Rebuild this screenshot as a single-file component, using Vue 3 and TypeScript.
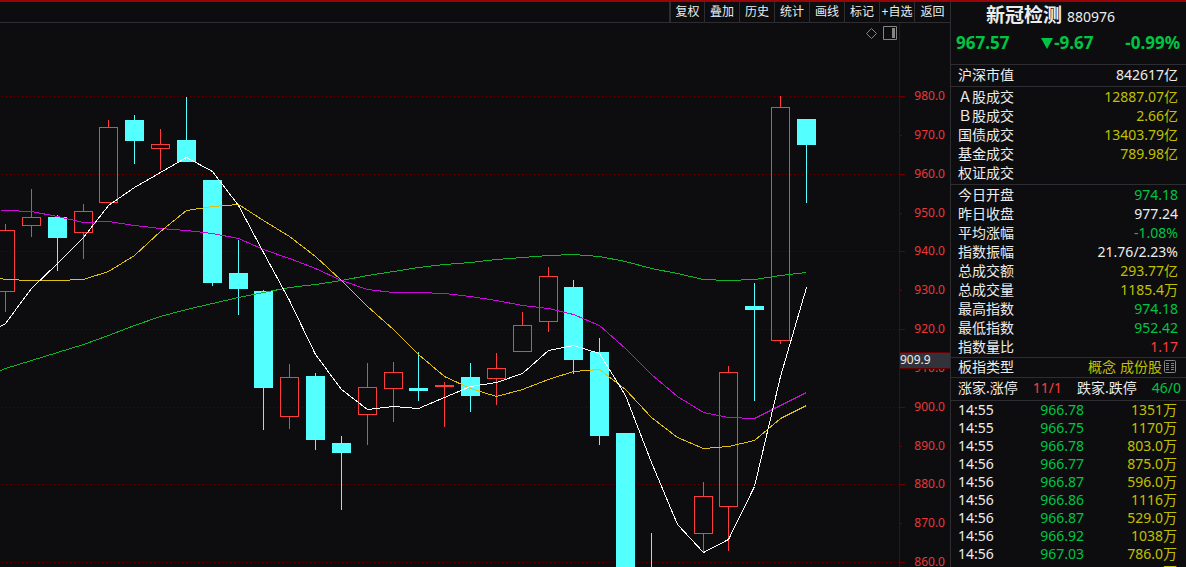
<script setup lang="ts">
type Kind = 'up' | 'down'
type Candle = [kind: Kind, x: number, high: number, top: number, bottom: number, low: number]
type Tone = 'green' | 'red' | 'yellow' | 'white'
type Stat = { label: string; value: string; tone: Tone }

const tools: string[] = ['复权', '叠加', '历史', '统计', '画线', '标记', '+自选', '返回']

const candles: Candle[] = [
  ['up', 5, 224, 230, 292, 312],
  ['up', 31, 189, 217, 226, 237],
  ['down', 57, 215, 217, 238, 271],
  ['up', 83, 204, 211, 233, 259],
  ['up', 108, 120, 127, 203, 203],
  ['down', 134, 115, 120, 141, 164],
  ['up', 160, 129, 144, 149, 170],
  ['down', 186, 97, 140, 162, 162],
  ['down', 212, 180, 180, 283, 286],
  ['down', 238, 240, 273, 289, 315],
  ['down', 263, 290, 291, 388, 430],
  ['up', 289, 364, 377, 417, 429],
  ['down', 315, 373, 376, 440, 450],
  ['down', 341, 436, 443, 453, 510],
  ['up', 367, 363, 387, 415, 445],
  ['up', 393, 362, 372, 389, 422],
  ['down', 418, 352, 388, 391, 401],
  ['up', 444, 382, 385, 387, 427],
  ['down', 470, 363, 377, 396, 412],
  ['up', 496, 353, 368, 379, 405],
  ['up', 522, 312, 325, 352, 352],
  ['up', 548, 267, 276, 322, 332],
  ['down', 573, 280, 287, 360, 374],
  ['down', 599, 338, 352, 436, 445],
  ['down', 625, 433, 433, 600, 600],
  ['down', 651, 533, 590, 600, 600],
  ['up', 703, 482, 496, 534, 552],
  ['up', 728, 366, 372, 507, 551],
  ['down', 754, 283, 306, 310, 401],
  ['up', 780, 96, 107, 341, 344],
  ['down', 806, 119, 119, 145, 203],
]

const xs: number[] = [
  0, 5, 31, 57, 83, 108, 134, 160, 186, 212, 238, 263, 289, 315, 341, 367, 393, 418, 444, 470,
  496, 522, 548, 573, 599, 625, 651, 677, 703, 728, 754, 780, 806,
]

const averages: { name: string; ys: number[] }[] = [
  {
    name: 'ma60',
    ys: [370, 368, 360, 352, 344, 335, 325, 316, 309, 303, 297, 292, 287, 284, 280, 275, 271, 267,
      264, 262, 259, 257, 255, 254, 256, 261, 268, 273, 279, 280, 279, 275, 272],
  },
  {
    name: 'ma20',
    ys: [210, 210, 211, 216, 222, 221, 225, 228, 230, 233, 238, 249, 258, 268, 280, 289, 292, 292,
      293, 296, 300, 305, 308, 314, 325, 348, 374, 396, 412, 417, 418, 405, 392],
  },
  {
    name: 'ma10',
    ys: [278, 279, 280, 280, 279, 271, 255, 231, 210, 206, 204, 220, 236, 256, 280, 306, 329, 354,
      376, 388, 396, 389, 379, 371, 369, 389, 417, 437, 448, 446, 440, 418, 405],
  },
  {
    name: 'ma5',
    ys: [326, 323, 288, 263, 237, 205, 187, 172, 157, 171, 205, 252, 300, 354, 389, 409, 406, 408,
      397, 386, 382, 373, 350, 345, 353, 395, 462, 524, 552, 539, 486, 376, 287],
  },
]

const toPoints = (ys: number[]): string => ys.map((y, i) => `${xs[i] + 0.5},${y + 0.5}`).join(' ')

const levels = [96, 135, 174, 213, 251, 290, 329, 368, 407, 446, 484, 523, 562].map((y, i) => ({
  y,
  text: (980 - i * 10).toFixed(1),
  major: i % 2 === 0,
}))

const sections: { name: string; rows: Stat[] }[] = [
  { name: 'cap', rows: [{ label: '沪深市值', value: '842617亿', tone: 'white' }] },
  {
    name: 'turnover',
    rows: [
      { label: 'Ａ股成交', value: '12887.07亿', tone: 'yellow' },
      { label: 'Ｂ股成交', value: '2.66亿', tone: 'yellow' },
      { label: '国债成交', value: '13403.79亿', tone: 'yellow' },
      { label: '基金成交', value: '789.98亿', tone: 'yellow' },
      { label: '权证成交', value: '', tone: 'yellow' },
    ],
  },
  {
    name: 'today',
    rows: [
      { label: '今日开盘', value: '974.18', tone: 'green' },
      { label: '昨日收盘', value: '977.24', tone: 'white' },
      { label: '平均涨幅', value: '-1.08%', tone: 'green' },
      { label: '指数振幅', value: '21.76/2.23%', tone: 'white' },
      { label: '总成交额', value: '293.77亿', tone: 'yellow' },
      { label: '总成交量', value: '1185.4万', tone: 'yellow' },
      { label: '最高指数', value: '974.18', tone: 'green' },
      { label: '最低指数', value: '952.42', tone: 'green' },
      { label: '指数量比', value: '1.17', tone: 'red' },
    ],
  },
]

const trades: [time: string, price: string, volume: string][] = [
  ['14:55', '966.78', '1351万'],
  ['14:55', '966.75', '1170万'],
  ['14:55', '966.78', '803.0万'],
  ['14:56', '966.77', '875.0万'],
  ['14:56', '966.87', '596.0万'],
  ['14:56', '966.86', '1116万'],
  ['14:56', '966.87', '529.0万'],
  ['14:56', '966.92', '1038万'],
  ['14:56', '967.03', '786.0万'],
  ['14:56', '966.98', '1206万'],
]
</script>

<template>
  <div class="terminal">
    <main class="chart-pane">
      <nav class="toolbar">
        <button v-for="tool in tools" :key="tool" type="button" class="tool">{{ tool }}</button>
      </nav>
      <div class="plot">
        <svg class="chart" viewBox="0 23 950 544" preserveAspectRatio="xMaxYMin slice" role="img" aria-label="日K线">
          <g class="crisp">
            <template v-for="level in levels" :key="level.y">
              <line v-if="level.major" class="grid" x1="2" :y1="level.y + 0.5" x2="899" :y2="level.y + 0.5" />
              <rect class="axis" x="899" :y="level.y" :width="level.major ? 6 : 3" height="1" />
            </template>
            <rect class="axis" x="899" y="23" width="1" height="544" />
            <g v-for="[kind, x, high, top, bottom, low] in candles" :key="x" :class="kind">
              <rect class="wick" :x="x" :y="high" width="1" :height="top - high" />
              <rect class="wick" :x="x" :y="bottom" width="1" :height="low - bottom" />
              <rect v-if="kind === 'down'" class="body" :x="x - 9" :y="top" width="19" :height="bottom - top" />
              <rect v-else class="body" :x="x - 8.5" :y="top + 0.5" width="18" :height="bottom - top - 1" />
            </g>
            <polyline v-for="line in averages" :key="line.name" :class="['average', line.name]" :points="toPoints(line.ys)" />
          </g>
          <text v-for="level in levels" :key="level.text" class="level" x="945" :y="level.y + 4">{{ level.text }}</text>
          <rect class="axis" x="900" y="352" width="50" height="17" />
          <rect class="cursor-box" x="900" y="353" width="50" height="15" />
          <text class="cursor-text" x="900" y="364">909.9</text>
        </svg>
        <div class="overlay">
          <button type="button" class="icon" aria-label="标记点">
            <svg width="11" height="11" viewBox="0 0 11 11"><path d="M5.5 .5 10.5 5.5 5.5 10.5 .5 5.5Z" fill="none" stroke="#858585" /></svg>
          </button>
          <button type="button" class="icon" aria-label="侧栏">
            <svg width="14" height="14" viewBox="0 0 14 14"><path d="M.5 .5h13v13H.5z" fill="none" stroke="#858585" /><path d="M9 2h3v10H9z" fill="#858585" /></svg>
          </button>
        </div>
      </div>
    </main>

    <aside class="quote">
      <header class="head">
        <h1 class="title">新冠检测 <span class="code">880976</span></h1>
        <div class="price green">
          <span>967.57</span>
          <span class="change"><svg width="12" height="11" viewBox="0 0 12 11"><path d="M0 0h12L6 11z" fill="currentColor" /></svg>-9.67</span>
          <span>-0.99%</span>
        </div>
      </header>
      <dl v-for="section in sections" :key="section.name" :class="['section', section.name]">
        <div v-for="row in section.rows" :key="row.label" class="row">
          <dt>{{ row.label }}</dt>
          <dd :class="row.tone">{{ row.value }}</dd>
        </div>
      </dl>
      <div class="section row">
        <span>板指类型</span>
        <span class="links">
          <a href="#concept">概念</a>
          <a href="#members">成份股<svg width="12" height="13" viewBox="0 0 12 13"><rect x=".5" y=".5" width="11" height="12" rx="1" fill="none" stroke="#858585" /><path d="M2 3.5h3M2 5.5h3M2 7.5h3M2 9.5h3M7 3.5h3M7 5.5h3M7 7.5h3M7 9.5h3" stroke="#858585" /></svg></a>
        </span>
      </div>
      <div class="section breadth">
        <span>涨家.涨停</span><span class="red">11/1</span>
        <span>跌家.跌停</span><span class="green">46/0</span>
      </div>
      <div class="section trades">
        <table>
          <tbody>
            <tr v-for="([time, price, volume], i) in trades" :key="i">
              <td class="time">{{ time }}</td>
              <td class="green">{{ price }}</td>
              <td class="yellow">{{ volume }}</td>
            </tr>
          </tbody>
        </table>
      </div>
    </aside>
  </div>
</template>

<style>
body {
  background: #0d0d0f;
}
</style>

<style scoped>
.terminal {
  box-sizing: border-box;
  display: grid;
  grid-template-columns: minmax(0, 1fr) 236px;
  height: 100vh;
  overflow: hidden;
  border-top: 2px solid #980408;
  background: #0d0d0f;
  color: #ececec;
  font: 14px/17px "Noto Sans", "Noto Sans CJK SC", sans-serif;
}
button {
  margin: 0;
  padding: 0;
  border: 0;
  background: none;
  color: inherit;
  font: inherit;
}
.chart-pane {
  display: flex;
  flex-direction: column;
  min-width: 0;
  min-height: 0;
}
.toolbar {
  display: flex;
  justify-content: flex-end;
  height: 20px;
  border-bottom: 1px solid #2e2e32;
  font-size: 12px;
}
.tool {
  box-sizing: border-box;
  width: 35px;
  border-left: 1px solid #2e2e32;
  white-space: nowrap;
  line-height: 18px;
}
.tool:first-child {
  border-left-width: 2px;
}
.tool:last-child {
  width: 36px;
}
.plot {
  position: relative;
  flex: 1;
  min-height: 0;
}
.chart {
  display: block;
  width: 100%;
  height: 100%;
}
.crisp {
  shape-rendering: crispEdges;
}
.grid {
  stroke: #640000;
  stroke-dasharray: 1 3;
}
.axis {
  fill: #640000;
}
.wick {
  stroke: none;
}
.down rect {
  fill: #54ffff;
}
.up .wick {
  fill: #ff3c3c;
}
.up .body {
  fill: none;
  stroke: #ff3c3c;
}
.average {
  fill: none;
  stroke-width: 1px;
}
.ma5 { stroke: #ffffff; }
.ma10 { stroke: #e0c010; }
.ma20 { stroke: #cc08dc; }
.ma60 { stroke: #10b428; }
.level {
  fill: #e83838;
  font-size: 12px;
  text-anchor: end;
}
.cursor-box {
  fill: #32323a;
}
.cursor-text {
  fill: #ececec;
  font-size: 12px;
}
.overlay {
  position: absolute;
  top: 3px;
  right: 53px;
  display: flex;
  align-items: center;
  gap: 6px;
}
.icon svg {
  display: block;
}
.quote {
  display: flex;
  flex-direction: column;
  min-height: 0;
  overflow: hidden;
  border-left: 1px solid #2e2e32;
}
.head {
  flex: none;
  height: 62px;
}
.title {
  margin: 0;
  padding-left: 35px;
  font-size: 19px;
  font-weight: 700;
  line-height: 26px;
  white-space: nowrap;
}
.code {
  font-size: 14px;
  font-weight: 400;
}
.price {
  display: flex;
  justify-content: space-between;
  padding: 0 6px 0 5px;
  font-size: 17px;
  font-weight: 700;
  line-height: 26px;
}
.change svg {
  margin-right: 1px;
}
.section {
  flex: none;
  margin: 0;
  padding: 0 8px 0 7px;
  border-top: 1px solid #2e2e32;
}
.row {
  display: flex;
  justify-content: space-between;
  height: 19px;
}
.row dd {
  margin: 0;
}
.cap {
  padding-top: 1px;
  padding-bottom: 1px;
}
.turnover {
  padding-top: 1px;
  padding-bottom: 1px;
}
.today {
  padding-top: 1px;
}
.links {
  display: flex;
  align-items: flex-start;
  gap: 4px;
  padding-right: 2px;
}
.links a {
  display: flex;
  align-items: center;
  gap: 2px;
  color: #c0c000;
  text-decoration: none;
}
.breadth {
  display: flex;
  justify-content: space-between;
  height: 22px;
  padding-right: 5px;
  line-height: 20px;
}
.trades table {
  width: 100%;
  border-collapse: collapse;
  line-height: 18px;
}
.trades td {
  padding: 0;
  text-align: right;
}
.trades .time {
  width: 36px;
  text-align: left;
}
.trades .green {
  width: 90px;
}
.trades td.yellow {
  padding-right: 1px;
}
.green { color: #00c444; }
.red { color: #ff3c3c; }
.yellow { color: #c0c000; }
.white { color: #ececec; }
</style>
